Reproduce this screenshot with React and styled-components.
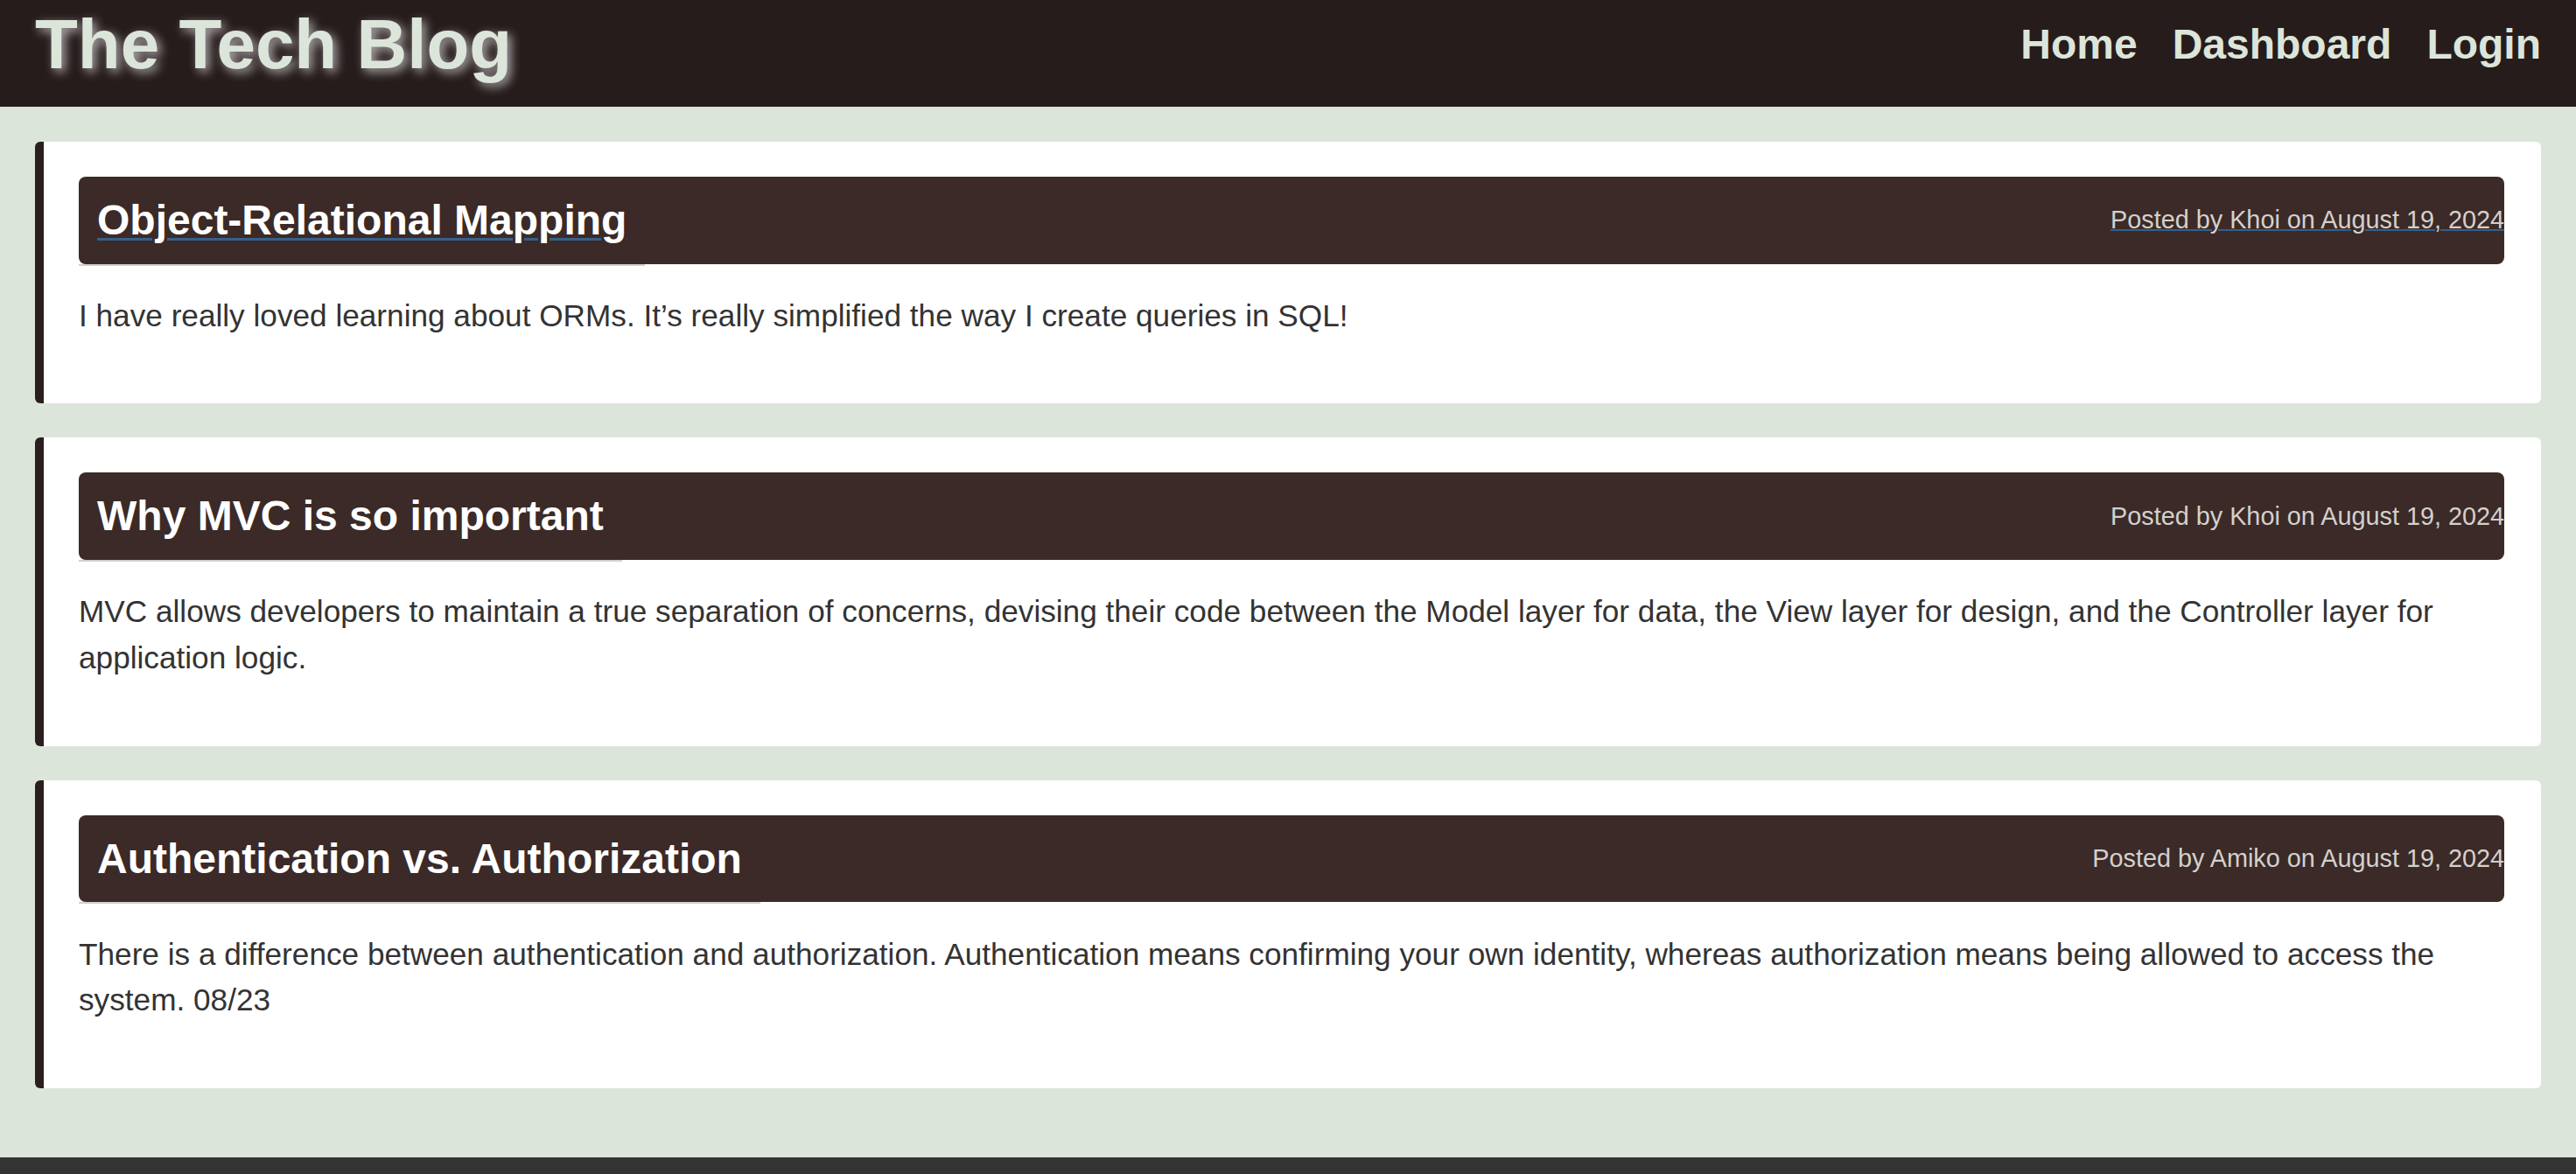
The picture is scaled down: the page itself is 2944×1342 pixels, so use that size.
import React from "react";
import styled, { createGlobalStyle } from "styled-components";

const GlobalStyle = createGlobalStyle`
  html, body {
    margin: 0;
    padding: 0;
    background-color: #dce5da;
    font-family: "Liberation Sans", Arial, sans-serif;
  }
`;

const Page = styled.div`
  min-height: 100vh;
  display: flex;
  flex-direction: column;
`;

const Header = styled.header`
  height: 122px;
  box-sizing: border-box;
  padding: 0 40px 21px 40px;
  display: flex;
  align-items: center;
  justify-content: space-between;
  background-color: #271c1c;
`;

const SiteTitle = styled.h1`
  margin: 0;
  font-size: 80px;
  line-height: 1;
  font-weight: 700;
  color: #dce5da;
  text-shadow: 4px 4px 12px rgba(255, 255, 255, 0.65);
`;

const Nav = styled.nav`
  display: flex;
  gap: 40px;
`;

const NavLink = styled.a`
  font-size: 48px;
  line-height: 1;
  font-weight: 700;
  color: #dce5da;
  text-decoration: none;
`;

const Main = styled.main`
  flex: 1;
  padding: 40px;
`;

const Card = styled.article`
  background-color: #fff;
  border-left: 10px solid #2a1e1e;
  border-radius: 6px;
  padding: 40px 42px 40px 40px;
  margin-bottom: 39px;
`;

const PostHeader = styled.div`
  display: flex;
  align-items: center;
  justify-content: space-between;
  background-color: #3b2a27;
  border-radius: 8px;
`;

const PostTitle = styled.h2`
  margin: 0;
  padding: 21px;
  font-size: 48px;
  line-height: 1.2;
  font-weight: 700;
  color: #fff;
  box-shadow: 0 2px 0 #cfcfcf;
  text-decoration: ${(p) => (p.$active ? "underline" : "none")};
  text-decoration-color: #35608a;
  text-decoration-thickness: 3px;
  text-underline-offset: 4px;
`;

const Meta = styled.span`
  font-size: 28.8px;
  color: #d3d0cd;
  text-decoration: ${(p) => (p.$active ? "underline" : "none")};
  text-decoration-color: #35608a;
  text-decoration-thickness: 2px;
`;

const Body = styled.p`
  margin: 33.5px 0;
  font-size: 35.2px;
  line-height: 1.5;
  color: #333;
`;

const Footer = styled.footer`
  height: 60px;
  background-color: #333;
`;

const posts = [
  {
    title: "Object-Relational Mapping",
    author: "Khoi",
    date: "August 19, 2024",
    body: "I have really loved learning about ORMs. It\u2019s really simplified the way I create queries in SQL!",
    active: true,
  },
  {
    title: "Why MVC is so important",
    author: "Khoi",
    date: "August 19, 2024",
    body: "MVC allows developers to maintain a true separation of concerns, devising their code between the Model layer for data, the View layer for design, and the Controller layer for application logic.",
  },
  {
    title: "Authentication vs. Authorization",
    author: "Amiko",
    date: "August 19, 2024",
    body: "There is a difference between authentication and authorization. Authentication means confirming your own identity, whereas authorization means being allowed to access the system. 08/23",
  },
];

const App = () => {
  return (
    <>
      <GlobalStyle />
      <Page>
        <Header>
          <SiteTitle>The Tech Blog</SiteTitle>
          <Nav>
            <NavLink href="#">Home</NavLink>
            <NavLink href="#">Dashboard</NavLink>
            <NavLink href="#">Login</NavLink>
          </Nav>
        </Header>
        <Main>
          {posts.map((post) => (
            <Card key={post.title}>
              <PostHeader>
                <PostTitle $active={post.active}>{post.title}</PostTitle>
                <Meta $active={post.active}>
                  Posted by {post.author} on {post.date}
                </Meta>
              </PostHeader>
              <Body>{post.body}</Body>
            </Card>
          ))}
        </Main>
        <Footer />
      </Page>
    </>
  );
};

export default App;
